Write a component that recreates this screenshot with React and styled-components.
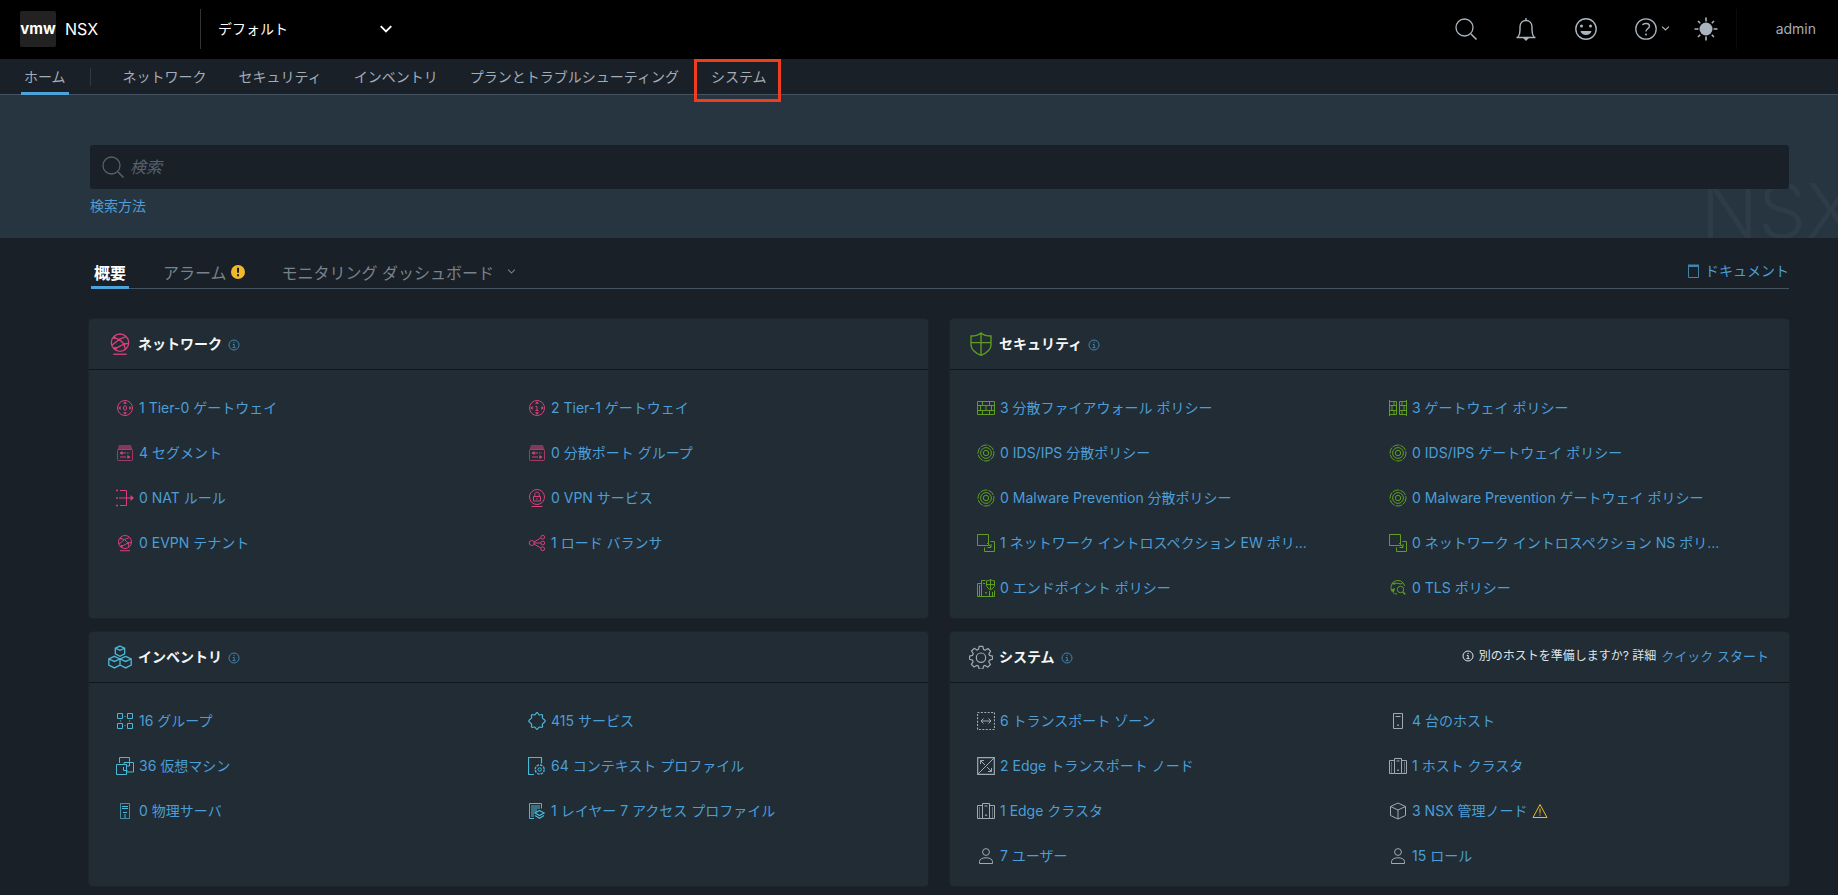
import styled, { createGlobalStyle } from "styled-components";

const colors = {
  page: "#1a2027",
  hero: "#273541",
  card: "#212c34",
  line: "#465360",
  link: "#4b9ed8",
  linkDim: "#4183aa",
  accent: "#4da3d9",
  text: "#a3adb8",
  pink: "#d8407c",
  green: "#5f9e22",
  cyan: "#4bb8d8",
  gray: "#a0aab2",
  yellow: "#efb92b",
};

const GlobalStyle = createGlobalStyle`
  * {
    box-sizing: border-box;
  }
  body {
    margin: 0;
    background-color: ${colors.page};
    color: ${colors.text};
    font-family: Inter, "Noto Sans CJK JP", sans-serif;
    font-size: 14px;
    line-height: 20px;
  }
  a {
    text-decoration: none;
  }
  button, input, select {
    font-family: inherit;
  }
`;

/* ---------- icons ---------- */

function Svg({ size = 18, box = 18, children, ...rest }) {
  return (
    <svg
      width={size}
      height={size}
      viewBox={`0 0 ${box} ${box}`}
      fill="none"
      stroke="currentColor"
      strokeWidth="1"
      aria-hidden="true"
      {...rest}
    >
      {children}
    </svg>
  );
}

const SearchIcon = () => (
  <Svg size={24} box={24}>
    <circle cx="10.5" cy="10.5" r="8.5" strokeWidth="1.3" />
    <path d="M17 17l5.5 5.5" strokeWidth="1.6" />
  </Svg>
);

const BellIcon = () => (
  <Svg size={24} box={24}>
    <path
      d="M2.5 20.5h19M4 20c1.8-2 2-4 2-7V10c0-4 2.5-6.5 6-6.5s6 2.5 6 6.5v3c0 3 .2 5 2 7"
      strokeWidth="1.4"
    />
    <path d="M12 1v2.5M10.5 21.5h3l-1.5 1.5z" strokeWidth="1.4" />
  </Svg>
);

const SmileIcon = () => (
  <Svg size={24} box={24}>
    <circle cx="12" cy="12" r="10.2" strokeWidth="1.4" />
    <circle cx="7.5" cy="9" r="1.5" fill="currentColor" stroke="none" />
    <circle cx="16.5" cy="9" r="1.5" fill="currentColor" stroke="none" />
    <path d="M6.5 14h11c-.8 5.300-10.200 5.300-11 0z" fill="currentColor" stroke="none" />
  </Svg>
);

const HelpIcon = () => (
  <Svg size={24} box={24}>
    <circle cx="12" cy="12" r="10.2" strokeWidth="1.3" />
    <path d="M8.5 8c1.200-2.200 7-2.200 7 1.200 0 2.300-3.500 2.300-3.500 5.300" strokeWidth="1.4" />
    <circle cx="12" cy="17.5" r="1" fill="currentColor" stroke="none" />
  </Svg>
);

const SunIcon = () => (
  <Svg size={24} box={24}>
    <circle cx="12" cy="12" r="6.5" fill="currentColor" stroke="none" />
    <path
      d="M12 .5v4M12 19.5v4M.5 12h4M19.5 12h4M4 4l2.200 2.200M17.800 17.800l2.200 2.200M20 4l-2.200 2.200M6.200 17.800L4 20"
      strokeWidth="1.6"
    />
  </Svg>
);

const Chevron = ({ size = 12, width = 1.4 }) => (
  <Svg size={size} box={12} strokeWidth={width}>
    <path d="M1.5 3.500L6 8l4.500-4.500" />
  </Svg>
);

const InfoIcon = () => (
  <Svg size={12} box={12}>
    <circle cx="6" cy="6" r="5" />
    <path d="M6 2.800v1.300M4.800 5.500H6.200v3M4.500 8.600h3" />
  </Svg>
);

const AlertBadge = () => (
  <Svg size={14} box={14} stroke="none">
    <circle cx="7" cy="7" r="7" fill={colors.yellow} />
    <path d="M6 2.800h2v5H6zM6 9.300h2v2H6z" fill={colors.page} />
  </Svg>
);

const WarningIcon = () => (
  <Svg size={16} box={16} stroke={colors.yellow}>
    <path d="M8 1.500L15 14.500H1z" strokeLinejoin="round" />
    <path d="M8 5.500v5M8 11.500v1.200" />
  </Svg>
);

const BookIcon = () => (
  <Svg size={14} box={14} stroke={colors.linkDim}>
    <path d="M2.500 3v10.500h10V3" />
    <path d="M2 .5h11v2.500H2z" fill={colors.linkDim} stroke="none" />
  </Svg>
);

const globe = (
  <>
    <circle cx="9" cy="8" r="6.500" />
    <path d="M4 4.200l4.500 1.300 5-2M8.500 5.500L12 9l-6.500 3.500M12 9l3.500-.5M12 9l1 4M3 10l5.500-4.500" />
    <circle cx="12" cy="9" r="1" fill="currentColor" stroke="none" />
    <circle cx="5.500" cy="12.300" r="1.200" fill="currentColor" stroke="none" />
    <circle cx="5" cy="4.400" r="1" fill="currentColor" stroke="none" />
    <path d="M4 16.700h10" />
  </>
);

const clusterTower = (
  <>
    <path d="M5.500 1.500h7v15h-7z" />
    <path d="M5 3.500H.5v13h5M13 3.500h4.500v13h-5" />
    <path d="M2.500 5v11M15.500 5v11" opacity=".5" />
    <path d="M7.500 4h3" />
    <path d="M8.200 12.500h1.600v1.600H8.200z" fill="currentColor" stroke="none" />
  </>
);

const target = (
  <>
    <circle cx="9" cy="9" r="8" strokeDasharray="7 1" />
    <circle cx="9" cy="9" r="5.400" />
    <circle cx="9" cy="9" r="2.700" />
  </>
);

const gatewayRing = (
  <>
    <circle cx="9" cy="9" r="7.500" />
    <path
      d="M9 2.200L11 4.700H7zM9 15.800l2-2.500H7zM2.200 9L4.700 7v4zM15.800 9l-2.500-2v4z"
      fill="currentColor"
      stroke="none"
    />
  </>
);

const switchBox = (
  <>
    <path d="M3 1h12l1.500 4.500h-15z" fill="currentColor" stroke="none" opacity=".55" />
    <rect x="1.500" y="5.500" width="15" height="11" rx="1" opacity=".7" />
    <path d="M4 9h10M4 13h10" strokeDasharray="6 1 1.500 1" />
    <path d="M6.500 7L3.500 9l3 2zM11.500 11l3 2-3 2z" fill="currentColor" stroke="none" />
  </>
);

const overlapSquares = (
  <>
    <path d="M.5.500h11v11H.500z" />
    <path d="M13.500 7.500h4v10h-10v-4" />
    <path d="M10 9l4 4M14 10v3.500h-3.500" />
  </>
);

const person = (
  <>
    <circle cx="9" cy="5" r="3.400" />
    <path d="M2.500 16.500v-2c0-5 13-5 13 0v2z" strokeLinejoin="round" />
  </>
);

const shapes = {
  globe,
  target,
  person,
  clusterTower,
  overlapSquares,
  switchBox,
  tier0: (
    <>
      {gatewayRing}
      <ellipse cx="9" cy="9" rx="1.500" ry="2.300" />
    </>
  ),
  tier1: (
    <>
      {gatewayRing}
      <path d="M7.500 7.500H9v4M7.500 11.500h3" />
    </>
  ),
  nat: (
    <>
      <path d="M4 1.500h6.500v15H4M3 9h13" />
      <path d="M0 1.500h2M0 9h2M0 16.500h2" strokeWidth="1.500" />
      <path d="M14.500 6l3.500 3-3.500 3z" fill="currentColor" stroke="none" />
    </>
  ),
  vpn: (
    <>
      <circle cx="9" cy="8" r="7.500" />
      <path d="M5.500 7.500h7v4.500h-7zM6.800 7.500V5.200c0-2.600 4.400-2.600 4.400 0v2.300M9 9v1.500" />
      <path d="M3.500 17.500h11" />
    </>
  ),
  balancer: (
    <>
      <circle cx="3.700" cy="9" r="2.500" />
      <circle cx="14.700" cy="3.200" r="1.900" />
      <circle cx="14.700" cy="9" r="1.900" />
      <circle cx="14.700" cy="14.800" r="1.900" />
      <path d="M6 8l6.800-4M6.200 9h6.500M6 10l6.800 4" />
    </>
  ),
  shield: (
    <path d="M9 .7C7 2.300 4 3 1.500 3v6.500c0 4 4 6.500 7.500 8 3.500-1.500 7.500-4 7.500-8V3C14 3 11 2.300 9 .7zM9 .7v16.600M1.500 8h15" />
  ),
  firewall: (
    <path d="M.5 2.500h17v13H.500zM.5 6.500h17M.5 11.500h17M5.500 2.500v4M12.500 2.500v4M3.500 6.500v5M9 6.500v5M14.500 6.500v5M5.500 11.500v4M12.500 11.500v4" />
  ),
  gatewayWall: (
    <path d="M.5 1v16M17.500 1v16M.5 2.500h7v13h-7M17.500 2.500h-7v13h7M.5 6.500h7M.5 11.500h7M10.500 6.500h7M10.500 11.500h7M5 2.500v4M13 2.500v4M3 6.500v5M15 6.500v5M5 11.500v4M13 11.500v4" />
  ),
  endpoint: (
    <>
      <path d="M4.500 17V1.500h4M4 4.500H.5v13h17v-6M2.500 6v11M6 4.500h2M12.500 12v5M15.500 13v4" />
      <path d="M13.500.7c-1.200.8-2.500 1.100-4 1.100v4.200c0 2.500 2.500 4 4 4.800 1.500-.8 4-2.300 4-4.800V1.800c-1.500 0-2.800-.3-4-1.100zM13.500.7v10M9.500 5.500h8" />
      <path d="M8.200 13h1.600v1.600H8.200z" fill="currentColor" stroke="none" />
    </>
  ),
  tls: (
    <>
      <path d="M8 15C4 14.800 2 12 2 8.500 2 4.500 5 1.500 9 1.500c3.500 0 6 2.500 6.500 5.500M3 5l4-1 5 1 2-1.500M3 11l3-1.500" />
      <path d="M2 9.500l4 1-1.500 3zM3 3.500l4 1L5 6z" fill="currentColor" stroke="none" />
      <circle cx="11.500" cy="10.500" r="3.200" />
      <path d="M13.800 13l2.500 2.500" strokeWidth="1.400" />
    </>
  ),
  cubes: (
    <>
      <path d="M9 .8l3.500 1.500v4.400L9 8.500 5.500 6.700V2.300zM5.500 2.300L9 4l3.500-1.700" />
      <path d="M4.800 8.500l4.200 2v4.500l-4.200 2.200L.6 15v-4.500zM.6 10.500l4.200 1.800L9 10.500M13.200 8.500l4.200 2v4.500l-4.200 2.200L9 15M9 10.500l4.200-2M9 10.500l4.200 1.800 4.200-1.800" />
    </>
  ),
  groups: (
    <>
      <path d="M1.500 1.500h5v5h-5zM11.500 1.500h5v5h-5zM1.500 11.500h5v5h-5zM11.500 11.500h5v5h-5z" />
      <path d="M8.500 4.500h1M8.500 13.500h1M4.500 8.500v1M13.500 8.500v1" />
    </>
  ),
  machines: (
    <>
      <path d="M3.500 6V.5h10v4" />
      <path d="M.5 7.500h10v10H.500z" />
      <path d="M10.500 15h7V5.500h-9.500v2" />
      <path d="M7.500 10v3.500h4" />
      <path d="M13.500 4.500v4.500H11" />
    </>
  ),
  server: (
    <>
      <path d="M4.500 1.500h9v15h-9z" opacity=".7" />
      <path d="M6 4.500h6M6 6.500h6M7 10.500h4M9 12v4" />
    </>
  ),
  services: (
    <path
      d="M9 .7c1 0 1.300 1.900 2.200 2.200 1 .4 2.500-.8 3.200-.1.700.7-.4 2.200 0 3.100.4 1 2.900 2.100 2.900 3.100s-2.500 2.100-2.900 3.100c-.4.900.7 2.400 0 3.100-.7.700-2.200-.5-3.200-.1-.9.300-1.200 2.200-2.200 2.200s-1.300-1.900-2.200-2.200c-1-.4-2.500.8-3.200.1-.7-.7.4-2.200 0-3.100C3.200 11.100.7 10 .7 9s2.500-2.100 2.900-3.100c.4-.9-.7-2.400 0-3.100.7-.7 2.200.5 3.200.1C7.700 2.600 8 .7 9 .7z"
      strokeWidth="1.200"
    />
  ),
  context: (
    <>
      <path d="M6 17.500H.500V.5h13v6" strokeWidth="1.200" />
      <circle cx="11.700" cy="12.500" r="4.500" strokeWidth="1.400" strokeDasharray="2.500 1" />
      <circle cx="11.700" cy="12.500" r="1.700" />
    </>
  ),
  layer7: (
    <>
      <path d="M6 16.500H1.500v-15h12v5" />
      <path d="M3 3h9v4H9v3H6v5H3z" fill="currentColor" stroke="none" opacity=".5" />
      <path d="M11.500 8.500L16 11l-4.500 2.500L7 11zM7 13.500l4.500 2.700 4.500-2.700" strokeWidth="1.300" />
    </>
  ),
  gear: (
    <>
      <path
        d="M7.600 1h2.800l.5 2.300 1.300.6 2-1.300 2 2-1.300 2 .5 1.200 2.200.5v2.400l-2.200.6-.6 1.300 1.300 2-2 2-2-1.300-1.200.5-.5 2.200H7.600l-.5-2.200-1.300-.5-2 1.200-2-2 1.300-2-.5-1.200-2.200-.6V8.300l2.200-.5.6-1.300-1.300-2 2-2 2 1.300 1.200-.5z"
        strokeWidth=".9"
        strokeLinejoin="round"
      />
      <circle cx="9" cy="9.500" r="3.500" strokeWidth=".9" />
    </>
  ),
  zone: (
    <>
      <path d="M.5.500h17v17H.500z" strokeDasharray="2 1.400" strokeWidth="1.200" />
      <path d="M4 9h10M6.500 6.500L4 9l2.500 2.500M11.500 6.500L14 9l-2.500 2.500" />
    </>
  ),
  edge: (
    <>
      <path d="M.7.700h16.600v16.600H.7z" strokeWidth="1.200" />
      <path d="M1 17L17 1M3.500 3.500L8 8M10 10l4.500 4.500M3.500 7V3.500H7M14.500 11v3.500H11" />
    </>
  ),
  host: (
    <>
      <path d="M4.500 1.500h9v15h-9zM6.500 4.500h5" />
      <path d="M8.200 12.500h1.600v1.600H8.200z" fill="currentColor" stroke="none" />
    </>
  ),
  cube: <path d="M9 1l7.500 3.500v9L9 17l-7.500-3.500v-9zM1.500 4.500L9 8l7.500-3.500M9 8v9" strokeLinejoin="round" />,
};

const Icon = ({ name, size }) => <Svg size={size}>{shapes[name]}</Svg>;

/* ---------- data ---------- */

const navItems = ["ネットワーク", "セキュリティ", "インベントリ", "プランとトラブルシューティング"];

const cards = [
  {
    title: "ネットワーク",
    icon: "globe",
    color: colors.pink,
    items: [
      ["tier0", "1 Tier-0 ゲートウェイ"],
      ["tier1", "2 Tier-1 ゲートウェイ"],
      ["switchBox", "4 セグメント"],
      ["switchBox", "0 分散ポート グループ"],
      ["nat", "0 NAT ルール"],
      ["vpn", "0 VPN サービス"],
      ["globe", "0 EVPN テナント"],
      ["balancer", "1 ロード バランサ"],
    ],
  },
  {
    title: "セキュリティ",
    icon: "shield",
    color: colors.green,
    items: [
      ["firewall", "3 分散ファイアウォール ポリシー"],
      ["gatewayWall", "3 ゲートウェイ ポリシー"],
      ["target", "0 IDS/IPS 分散ポリシー"],
      ["target", "0 IDS/IPS ゲートウェイ ポリシー"],
      ["target", "0 Malware Prevention 分散ポリシー"],
      ["target", "0 Malware Prevention ゲートウェイ ポリシー"],
      ["overlapSquares", "1 ネットワーク イントロスペクション EW ポリ..."],
      ["overlapSquares", "0 ネットワーク イントロスペクション NS ポリ..."],
      ["endpoint", "0 エンドポイント ポリシー"],
      ["tls", "0 TLS ポリシー"],
    ],
  },
  {
    title: "インベントリ",
    icon: "cubes",
    color: colors.cyan,
    items: [
      ["groups", "16 グループ"],
      ["services", "415 サービス"],
      ["machines", "36 仮想マシン"],
      ["context", "64 コンテキスト プロファイル"],
      ["server", "0 物理サーバ"],
      ["layer7", "1 レイヤー 7 アクセス プロファイル"],
    ],
  },
  {
    title: "システム",
    icon: "gear",
    color: colors.gray,
    quickStart: true,
    items: [
      ["zone", "6 トランスポート ゾーン"],
      ["host", "4 台のホスト"],
      ["edge", "2 Edge トランスポート ノード"],
      ["clusterTower", "1 ホスト クラスタ"],
      ["clusterTower", "1 Edge クラスタ"],
      ["cube", "3 NSX 管理ノード", true],
      ["person", "7 ユーザー"],
      ["person", "15 ロール"],
    ],
  },
];

/* ---------- sections ---------- */

function Header() {
  return (
    <TopBar>
      <Brand href="#">
        <Logo>vmw</Logo>
        NSX
      </Brand>
      <Tenant>
        <TenantSelect aria-label="プロジェクト" defaultValue="default">
          <option value="default">デフォルト</option>
        </TenantSelect>
        <Chevron size={14} width={1.6} />
      </Tenant>
      <Actions>
        <IconButton aria-label="検索">
          <SearchIcon />
        </IconButton>
        <IconButton aria-label="アラーム">
          <BellIcon />
        </IconButton>
        <IconButton aria-label="フィードバック">
          <SmileIcon />
        </IconButton>
        <IconButton aria-label="ヘルプ">
          <HelpIcon />
          <Chevron size={9} width={1.6} />
        </IconButton>
        <IconButton aria-label="テーマ">
          <SunIcon />
        </IconButton>
      </Actions>
      <UserButton>admin</UserButton>
    </TopBar>
  );
}

function Card({ card }) {
  return (
    <CardBox>
      <CardHeader>
        <CardIcon $color={card.color}>
          <Icon name={card.icon} size={24} />
        </CardIcon>
        <CardTitle>{card.title}</CardTitle>
        <InfoButton aria-label={`${card.title}の情報`}>
          <InfoIcon />
        </InfoButton>
        {card.quickStart && (
          <Hint>
            <InfoIcon />
            別のホストを準備しますか? 詳細
            <HintLink href="#">クイック スタート</HintLink>
          </Hint>
        )}
      </CardHeader>
      <CardList>
        {card.items.map(([icon, label, warning]) => (
          <CardItem key={label} $color={card.color}>
            <Icon name={icon} />
            <ItemLink href="#">{label}</ItemLink>
            {warning && <WarningIcon />}
          </CardItem>
        ))}
      </CardList>
    </CardBox>
  );
}

function App() {
  return (
    <>
      <GlobalStyle />
      <Header />
      <Nav>
        <HomeLink href="#">ホーム</HomeLink>
        <NavDivider />
        {navItems.map((item) => (
          <NavLink href="#" key={item}>
            {item}
          </NavLink>
        ))}
        <MarkedLink href="#">システム</MarkedLink>
      </Nav>
      <Hero>
        <Watermark aria-hidden="true">NSX</Watermark>
        <SearchBox>
          <SearchIcon />
          <SearchInput type="search" placeholder="検索" aria-label="検索" />
        </SearchBox>
        <HowTo href="#">検索方法</HowTo>
      </Hero>
      <Main>
        <Tabs>
          <Tab $active>概要</Tab>
          <Tab>
            アラーム
            <AlertBadge />
          </Tab>
          <Tab>
            モニタリング ダッシュボード
            <TabArrow>
              <Chevron size={9} width={1.4} />
            </TabArrow>
          </Tab>
          <DocLink href="#">
            <BookIcon />
            ドキュメント
          </DocLink>
        </Tabs>
        <CardGrid>
          {cards.map((card) => (
            <Card card={card} key={card.title} />
          ))}
        </CardGrid>
      </Main>
    </>
  );
}

const TopBar = styled.header`
  display: flex;
  align-items: center;
  height: 59px;
  padding: 0 20px 2px;
  background-color: #000;
`;

const Brand = styled.a`
  display: flex;
  align-items: center;
  gap: 9px;
  width: 180px;
  color: #fff;
  font-size: 16px;
`;

const Logo = styled.span`
  display: flex;
  align-items: center;
  justify-content: center;
  width: 36px;
  height: 36px;
  border-radius: 2px;
  background-color: #222;
  font-size: 15px;
  font-weight: 700;
`;

const Tenant = styled.div`
  display: flex;
  align-items: center;
  height: 40px;
  padding-left: 17px;
  border-left: 1px solid #333;
  color: #fff;
`;

const TenantSelect = styled.select`
  width: 161px;
  padding: 0;
  border: 0;
  appearance: none;
  background: transparent;
  color: #fff;
  font-size: 14px;
`;

const Actions = styled.div`
  display: flex;
  gap: 36px;
  margin-left: auto;
`;

const IconButton = styled.button`
  display: flex;
  align-items: center;
  gap: 3px;
  width: 24px;
  padding: 0;
  border: 0;
  background: none;
  color: #aab4be;

  svg {
    flex-shrink: 0;
  }
`;

const UserButton = styled.button`
  height: 40px;
  margin-left: 18px;
  padding: 0 2px 0 39px;
  border: 0;
  border-left: 1px solid #0c0c0c;
  background: none;
  color: ${colors.text};
  font-size: 14px;
`;

const Nav = styled.nav`
  position: relative;
  z-index: 1;
  display: flex;
  align-items: center;
  height: 36px;
  padding-left: 21px;
  border-bottom: 1px solid ${colors.line};
`;

const NavLink = styled.a`
  margin-left: 32px;
  color: ${colors.text};
`;

const HomeLink = styled.a`
  height: 36px;
  padding: 8px 3px 0;
  border-bottom: 3px solid ${colors.accent};
  color: ${colors.text};
  margin-bottom: -1px;
`;

const NavDivider = styled.span`
  width: 1px;
  height: 18px;
  margin-left: 21px;
  background-color: #2f3943;
`;

/* frame around the highlighted menu entry, hangs over the bar's lower edge */
const MarkedLink = styled(NavLink)`
  position: relative;

  &::after {
    content: "";
    position: absolute;
    inset: -8px -14px -15px -17px;
    border: 3px solid #f03c1f;
  }
`;

const Hero = styled.section`
  position: relative;
  height: 143px;
  padding: 50px 49px 0 90px;
  overflow: hidden;
  background-color: ${colors.hero};
`;

const Watermark = styled.span`
  position: absolute;
  right: -18px;
  bottom: -20px;
  color: #2e3c47;
  font-size: 76px;
  font-weight: 300;
  line-height: 96px;
`;

const SearchBox = styled.div`
  position: relative;
  display: flex;
  align-items: center;
  gap: 5px;
  height: 44px;
  padding: 0 11px;
  border-radius: 3px;
  background-color: ${colors.page};
  color: #56616b;
`;

const SearchInput = styled.input`
  flex: 1;
  border: 0;
  outline: 0;
  padding: 0;
  background: none;
  color: #fff;
  font-size: 16px;

  &::placeholder {
    color: #56616b;
    font-style: italic;
  }
`;

const HowTo = styled.a`
  display: inline-block;
  margin-top: 7px;
  color: ${colors.link};
`;

const Main = styled.main`
  padding: 21px 49px 8px 89px;
`;

const Tabs = styled.div`
  display: flex;
  gap: 31px;
  height: 30px;
  margin-left: 2px;
  border-bottom: 1px solid ${colors.line};
`;

const Tab = styled.button`
  display: flex;
  align-items: center;
  gap: 4px;
  height: 30px;
  padding: 0 3px 2px;
  border: 0;
  border-bottom: 3px solid ${(props) => (props.$active ? colors.accent : "transparent")};
  background: none;
  color: ${(props) => (props.$active ? "#fff" : "#77828d")};
  font-size: 16px;
  font-weight: ${(props) => (props.$active ? 700 : 400)};
`;

const TabArrow = styled.span`
  display: flex;
  margin-left: 9px;
`;

const DocLink = styled.a`
  display: flex;
  align-items: center;
  gap: 5px;
  height: 24px;
  margin-left: auto;
  color: ${colors.link};
`;

const CardGrid = styled.div`
  display: grid;
  grid-template-columns: 1fr 1fr;
  gap: 14px 22px;
  margin-top: 30px;
`;

const CardBox = styled.section`
  border-radius: 4px;
  background-color: ${colors.card};
  box-shadow: 0 0 2px #26313a;
`;

const CardHeader = styled.header`
  display: flex;
  align-items: center;
  height: 51px;
  padding: 0 20px 0 19px;
  border-bottom: 1px solid #10171c;
`;

const CardIcon = styled.span`
  display: flex;
  color: ${(props) => props.$color};
`;

const CardTitle = styled.h2`
  margin: 0 6px;
  color: #f4f6f7;
  font-size: 14px;
  font-weight: 700;
`;

const InfoButton = styled.button`
  display: flex;
  padding: 2px 0 0;
  border: 0;
  background: none;
  color: ${colors.linkDim};
`;

const Hint = styled.p`
  display: flex;
  align-items: center;
  gap: 5px;
  margin: 0 0 0 auto;
  padding-bottom: 3px;
  color: #dfe4e8;
  font-size: 12px;
`;

const HintLink = styled.a`
  color: ${colors.link};
  font-size: 13px;
`;

const CardList = styled.ul`
  display: grid;
  grid-template-columns: 1fr 1fr;
  margin: 0;
  padding: 15px 0 8px 15px;
  list-style: none;
`;

const CardItem = styled.li`
  display: flex;
  align-items: center;
  gap: 5px;
  height: 45px;
  padding-left: 12px;
  color: ${(props) => props.$color};

  svg {
    flex-shrink: 0;
  }
`;

const ItemLink = styled.a`
  color: ${colors.link};
  white-space: nowrap;
`;

export default App;
